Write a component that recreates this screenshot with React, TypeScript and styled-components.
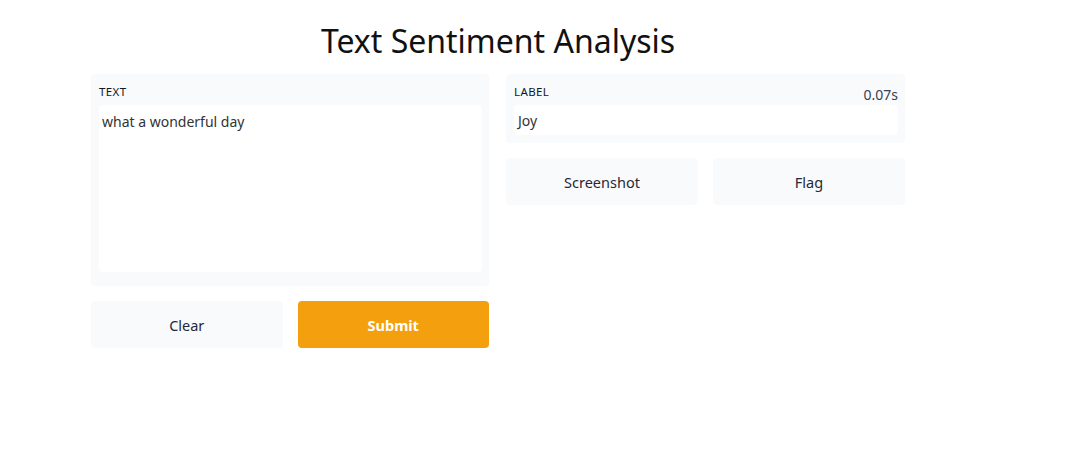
import styled, { createGlobalStyle } from 'styled-components';

const Global = createGlobalStyle`
  html, body {
    margin: 0;
    padding: 0;
    background: #ffffff;
    font-family: "Noto Sans", "Open Sans", sans-serif;
    color: #1f2937;
  }
`;

const Page = styled.div`
  width: 814px;
  margin-left: 91px;
  padding-top: 18px;
`;

const Title = styled.h1`
  margin: 0 0 10px;
  text-align: center;
  font-size: 32px;
  font-weight: 400;
  line-height: 46px;
  color: #111111;
`;

const Columns = styled.div`
  display: grid;
  grid-template-columns: 398px 399px;
  column-gap: 17px;
  align-items: start;
`;

const Column = styled.div`
  display: flex;
  flex-direction: column;
  gap: 15px;
`;

const Panel = styled.div<{ $pb: number }>`
  background: #f9fafb;
  border-radius: 4px;
  padding: 8px 7px ${p => p.$pb}px 8px;
  display: flex;
  flex-direction: column;
  gap: 3px;
`;

const PanelHead = styled.div`
  display: flex;
  justify-content: space-between;
  align-items: flex-end;
  height: 20px;
`;

const Label = styled.span`
  font-size: 11.5px;
  text-transform: uppercase;
  color: #111827;
  letter-spacing: 0.4px;
  line-height: 20px;
`;

const Time = styled.span`
  font-size: 14px;
  color: #374151;
  line-height: 16px;
  margin-bottom: -1px;
`;

const TextBox = styled.textarea<{ $h: number }>`
  box-sizing: border-box;
  width: 100%;
  height: ${p => p.$h}px;
  border: none;
  outline: none;
  resize: none;
  border-radius: 4px;
  background: #ffffff;
  padding: 7px 3px;
  font-family: "Noto Sans", "Open Sans", sans-serif;
  font-size: 14px;
  color: #333333;
`;

const Output = styled.div`
  box-sizing: border-box;
  height: 30px;
  background: #ffffff;
  border-radius: 4px;
  padding: 7px 4px 3px;
  font-size: 14px;
  line-height: 18px;
  color: #333333;
`;

const ButtonRow = styled.div`
  display: grid;
  grid-template-columns: 1fr 1fr;
  gap: 15px;
`;

const Button = styled.button<{ $primary?: boolean }>`
  height: 47px;
  border: none;
  border-radius: 4px;
  background: ${p => (p.$primary ? '#f49f0e' : '#f9fafb')};
  color: ${p => (p.$primary ? '#ffffff' : '#1f2937')};
  font-family: "Noto Sans", "Open Sans", sans-serif;
  font-size: 14.5px;
  font-weight: ${p => (p.$primary ? 700 : 400)};
  cursor: pointer;
`;

export default function App() {
  return (
    <>
      <Global />
      <Page>
        <Title>Text Sentiment Analysis</Title>
        <Columns>
          <Column>
            <Panel $pb={14}>
              <PanelHead>
                <Label>Text</Label>
              </PanelHead>
              <TextBox $h={167} defaultValue="what a wonderful day" />
            </Panel>
            <ButtonRow>
              <Button>Clear</Button>
              <Button $primary>Submit</Button>
            </ButtonRow>
          </Column>
          <Column>
            <Panel $pb={8}>
              <PanelHead>
                <Label>Label</Label>
                <Time>0.07s</Time>
              </PanelHead>
              <Output>Joy</Output>
            </Panel>
            <ButtonRow>
              <Button>Screenshot</Button>
              <Button>Flag</Button>
            </ButtonRow>
          </Column>
        </Columns>
      </Page>
    </>
  );
}
